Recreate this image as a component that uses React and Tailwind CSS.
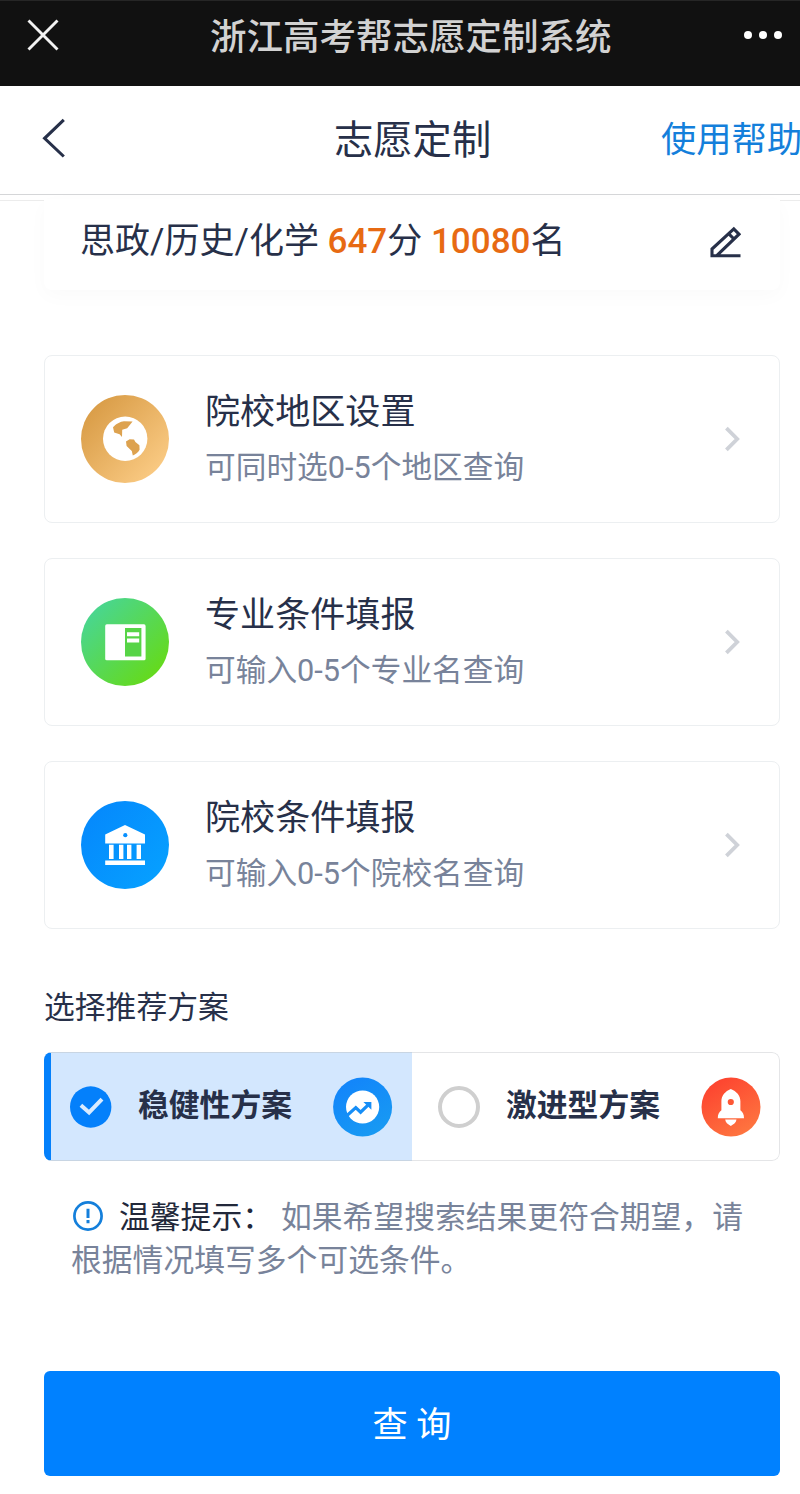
import React from "react";

function CloseIcon() {
  return (
    <svg className="h-8 w-8" viewBox="0 0 32 32" fill="none" stroke="#f2f2f2" strokeWidth="2.9">
      <path d="M1.5 1.5 30.5 30.5M30.5 1.5 1.5 30.5" />
    </svg>
  );
}

function MoreIcon() {
  return (
    <svg className="h-2 w-[38px]" viewBox="0 0 38 8" fill="#fff">
      <circle cx="4" cy="4" r="4" />
      <circle cx="19" cy="4" r="4" />
      <circle cx="34" cy="4" r="4" />
    </svg>
  );
}

function BackIcon() {
  return (
    <svg className="h-10 w-6" viewBox="0 0 24 40" fill="none" stroke="#273049" strokeWidth="3.1">
      <path d="M22.8 1.8 3.6 20.3 22.8 38.5" />
    </svg>
  );
}

function PencilIcon() {
  return (
    <svg className="h-8 w-8" viewBox="0 0 32 32" fill="none" stroke="#273049" strokeWidth="3.1">
      <path d="M31.5 29.8H3V23L24.8 2.8 30 8.2 8 29.4" />
      <path d="M19.6 7.6 25 13" />
    </svg>
  );
}

function Chevron() {
  return (
    <svg className="h-[26px] w-4" viewBox="0 0 16 26" fill="none" stroke="#cfd2d8" strokeWidth="3.8">
      <path d="M2.4 2.2 13.2 13 2.4 23.8" />
    </svg>
  );
}

function RegionIcon() {
  return (
    <svg className="h-[88px] w-[88px]" viewBox="0 0 88 88">
      <defs>
        <linearGradient id="gold" x1="0.1" y1="0.1" x2="0.95" y2="0.9">
          <stop offset="0" stopColor="#d89b45" />
          <stop offset="1" stopColor="#fccd87" />
        </linearGradient>
      </defs>
      <circle cx="44" cy="44" r="44" fill="url(#gold)" />
      <circle cx="44.2" cy="43.8" r="22.2" fill="#fff" />
      <path
        d="M32 32.3C34.5 29 39.5 26.4 43 26.2L51.6 26.6 46.2 33.2 41.2 34.8 41 42 38.6 39.2 33.2 37.6ZM45 46.4 48.6 44.2 53 44.4 54.4 47 58.4 50.2 58.6 54.8C57 57.6 54.6 59.4 51.8 60.4L50.8 56 45.6 51Z"
        fill="#dda24f"
      />
    </svg>
  );
}

function MajorIcon() {
  return (
    <svg className="h-[88px] w-[88px]" viewBox="0 0 88 88">
      <defs>
        <linearGradient id="green" x1="0.12" y1="0.15" x2="0.85" y2="0.88">
          <stop offset="0" stopColor="#49d690" />
          <stop offset="1" stopColor="#65da1b" />
        </linearGradient>
      </defs>
      <circle cx="44" cy="44" r="44" fill="url(#green)" />
      <rect x="24.2" y="26.3" width="40.4" height="36" rx="1.6" fill="#fff" />
      <rect x="44" y="30" width="16.4" height="28.5" fill="#57d447" />
      <path d="M46 34.3h12.2v4H46zM46 40.6h12.2v3.8H46z" fill="#fff" />
    </svg>
  );
}

function CollegeIcon() {
  return (
    <svg className="h-[88px] w-[88px]" viewBox="0 0 88 88">
      <defs>
        <linearGradient id="azure" x1="0" y1="0" x2="1" y2="0.8">
          <stop offset="0" stopColor="#0586fc" />
          <stop offset="1" stopColor="#06a0ff" />
        </linearGradient>
      </defs>
      <circle cx="44" cy="44" r="44" fill="url(#azure)" />
      <path
        d="M24.2 42.4V33.6L44 24 64 33.6V42.4ZM28 43.8h4.6v14.2H28zM38 43.8h4.4v14.2H38zM46 43.8h4.4v14.2H46zM55.6 43.8h4.4v14.2h-4.4zM24.2 59.4H64v4.6H24.2z"
        fill="#fff"
      />
      <circle cx="44.3" cy="34.2" r="2.1" fill="#0790ff" />
    </svg>
  );
}

function CheckedIcon() {
  return (
    <svg className="h-[42px] w-[42px]" viewBox="0 0 42 42">
      <circle cx="20.7" cy="21" r="20.7" fill="#0480fb" />
      <path d="M10.9 19.2 19.1 26.4 32 13.2" fill="none" stroke="#d9ebff" strokeWidth="4" />
    </svg>
  );
}

function TrendIcon() {
  return (
    <svg className="h-[60px] w-[60px]" viewBox="0 0 60 60">
      <defs>
        <linearGradient id="trend" x1="0.2" y1="0" x2="0.8" y2="1">
          <stop offset="0" stopColor="#1284fb" />
          <stop offset="1" stopColor="#189bf2" />
        </linearGradient>
      </defs>
      <circle cx="29.6" cy="30" r="29.5" fill="url(#trend)" />
      <circle cx="29.6" cy="30" r="16.6" fill="#fff" />
      <path d="M13.2 39.2 22.8 30.6 27.6 35.2 36 27.2" fill="none" stroke="#168ef7" strokeWidth="3.2" />
      <path d="M30.4 25H38.4V32.8Z" fill="#168ef7" />
    </svg>
  );
}

function RocketIcon() {
  return (
    <svg className="h-[60px] w-[60px]" viewBox="0 0 60 60">
      <defs>
        <linearGradient id="flame" x1="0.2" y1="0.1" x2="0.75" y2="1">
          <stop offset="0" stopColor="#fd4530" />
          <stop offset="1" stopColor="#fe7740" />
        </linearGradient>
      </defs>
      <circle cx="30" cy="30" r="29.5" fill="url(#flame)" />
      <path
        d="M29.8 12C35.5 14.4 39.4 18.5 39.4 24.3V33.2C41.8 35 43 37.2 43 41.2H16.8C16.8 37.2 18 35 20.4 33.2V24.3C20.4 18.5 24.2 14.4 29.8 12ZM24.2 42.6H35.5C35.2 45.6 33 47.3 29.8 49 26.6 47.3 24.5 45.6 24.2 42.6Z"
        fill="#fff"
      />
      <circle cx="29.8" cy="25" r="3.1" fill="#fd5735" />
    </svg>
  );
}

function NoticeIcon() {
  return (
    <svg className="mr-[16px] mb-[2px] ml-px h-[30px] w-[30px] shrink-0" viewBox="0 0 30 30">
      <circle cx="15" cy="15" r="13.6" fill="none" stroke="#147fdb" strokeWidth="2.7" />
      <path d="M13.5 7.8h3v9.2h-3zM13.5 19h3v3.2h-3z" fill="#147fdb" />
    </svg>
  );
}

const filters = [
  { icon: RegionIcon, title: "院校地区设置", hint: "可同时选0-5个地区查询" },
  { icon: MajorIcon, title: "专业条件填报", hint: "可输入0-5个专业名查询" },
  { icon: CollegeIcon, title: "院校条件填报", hint: "可输入0-5个院校名查询" },
];

function FilterCard({ icon: Icon, title, hint }) {
  return (
    <button className="flex h-[168px] w-full items-center rounded-lg border-[1.5px] border-[#eceff1] bg-white pr-[39px] pl-[36px] text-left">
      <Icon />
      <span className="ml-[36px] flex flex-1 flex-col pt-[2px]">
        <span className="text-[35.1px] leading-[56px] text-[#273049]">{title}</span>
        <span className="text-[30.7px] leading-[56px] text-[#78839a]">{hint}</span>
      </span>
      <Chevron />
    </button>
  );
}

export default function App() {
  return (
    <div className="flex h-[1494px] w-[800px] flex-col overflow-hidden bg-white font-['Roboto','Noto_Sans_CJK_SC',sans-serif] text-[#273049]">
      <header className="flex h-[86px] shrink-0 items-start border-t border-[#262626] bg-[#111111] pr-[18px] pl-[27px]">
        <div className="flex h-[68px] w-[183px] items-center">
          <CloseIcon />
        </div>
        <h1 className="h-[74px] flex-1 text-[36.5px] leading-[74px] font-medium whitespace-nowrap text-[#d2d2d2]">
          浙江高考帮志愿定制系统
        </h1>
        <div className="flex h-[67px] items-center">
          <MoreIcon />
        </div>
      </header>

      <nav className="flex h-[109px] shrink-0 items-center border-b-[1.5px] border-[#d5d6d8] pl-[41px]">
        <div className="w-[293px] shrink-0 pb-[5px]">
          <BackIcon />
        </div>
        <h2 className="w-[327px] shrink-0 pt-[2px] text-[39.3px] leading-[60px]">志愿定制</h2>
        <a className="shrink-0 text-[35.3px] leading-[60px] whitespace-nowrap text-[#147fdb]">使用帮助</a>
      </nav>

      <main className="flex flex-1 flex-col pr-[20px] pl-[44px]">
        <div className="-mr-5 -ml-11 flex h-[6px] justify-between border-b border-[#ececec]" />
        <section className="-mt-[2px] flex h-[91px] shrink-0 items-center rounded-b-lg bg-white pr-[39px] pb-[6px] pl-[36px] shadow-[0_6px_20px_rgba(20,40,60,0.025)]">
          <p className="flex-1 text-[35px] leading-[60px] whitespace-pre">
            思政/历史/化学 <b className="font-medium text-[#e76a13]">647</b>分 <b className="font-medium text-[#e76a13]">10080</b>名
          </p>
          <PencilIcon />
        </section>

        <section className="mt-[65px] flex shrink-0 flex-col gap-[35px]">
          {filters.map((item) => (
            <FilterCard key={item.title} {...item} />
          ))}
        </section>

        <h3 className="mt-[56px] text-[30.8px] leading-[46px]">选择推荐方案</h3>

        <section className="mt-[21px] grid h-[109px] shrink-0 grid-cols-2 overflow-hidden rounded-lg">
          <button className="flex items-center border-y border-l-[7px] border-y-[#c8d5e3] border-l-[#0480fb] bg-[#d3e7fe] pr-[19px] pl-[19px]">
            <CheckedIcon />
            <span className="ml-[26px] flex-1 pb-[2px] text-left text-[30.8px] leading-[46px] font-bold">稳健性方案</span>
            <TrendIcon />
          </button>
          <button className="flex items-center rounded-r-lg border border-l-0 border-[#e4e5e7] pr-[18px] pl-[26px]">
            <span className="h-[42px] w-[42px] rounded-full border-4 border-[#cfcfcf] bg-white" />
            <span className="ml-[26px] flex-1 pb-[2px] text-left text-[30.8px] leading-[46px] font-bold">激进型方案</span>
            <RocketIcon />
          </button>
        </section>

        <section className="mt-[34px] shrink-0 pl-[28px] text-[30.8px] leading-[44px] whitespace-nowrap text-[#78839a]">
          <div className="flex h-[44px] items-center">
            <NoticeIcon />
            <span className="mr-[8px] pt-[2px] text-[#22283a]">温馨提示：</span>
            <span className="pt-[2px]">如果希望搜索结果更符合期望，请</span>
          </div>
          <p className="-ml-px">根据情况填写多个可选条件。</p>
        </section>

        <button className="mt-[88px] h-[105px] shrink-0 rounded-md bg-[#0081ff] pt-[3px] text-[35.2px] text-white">
          查 询
        </button>
      </main>
    </div>
  );
}
